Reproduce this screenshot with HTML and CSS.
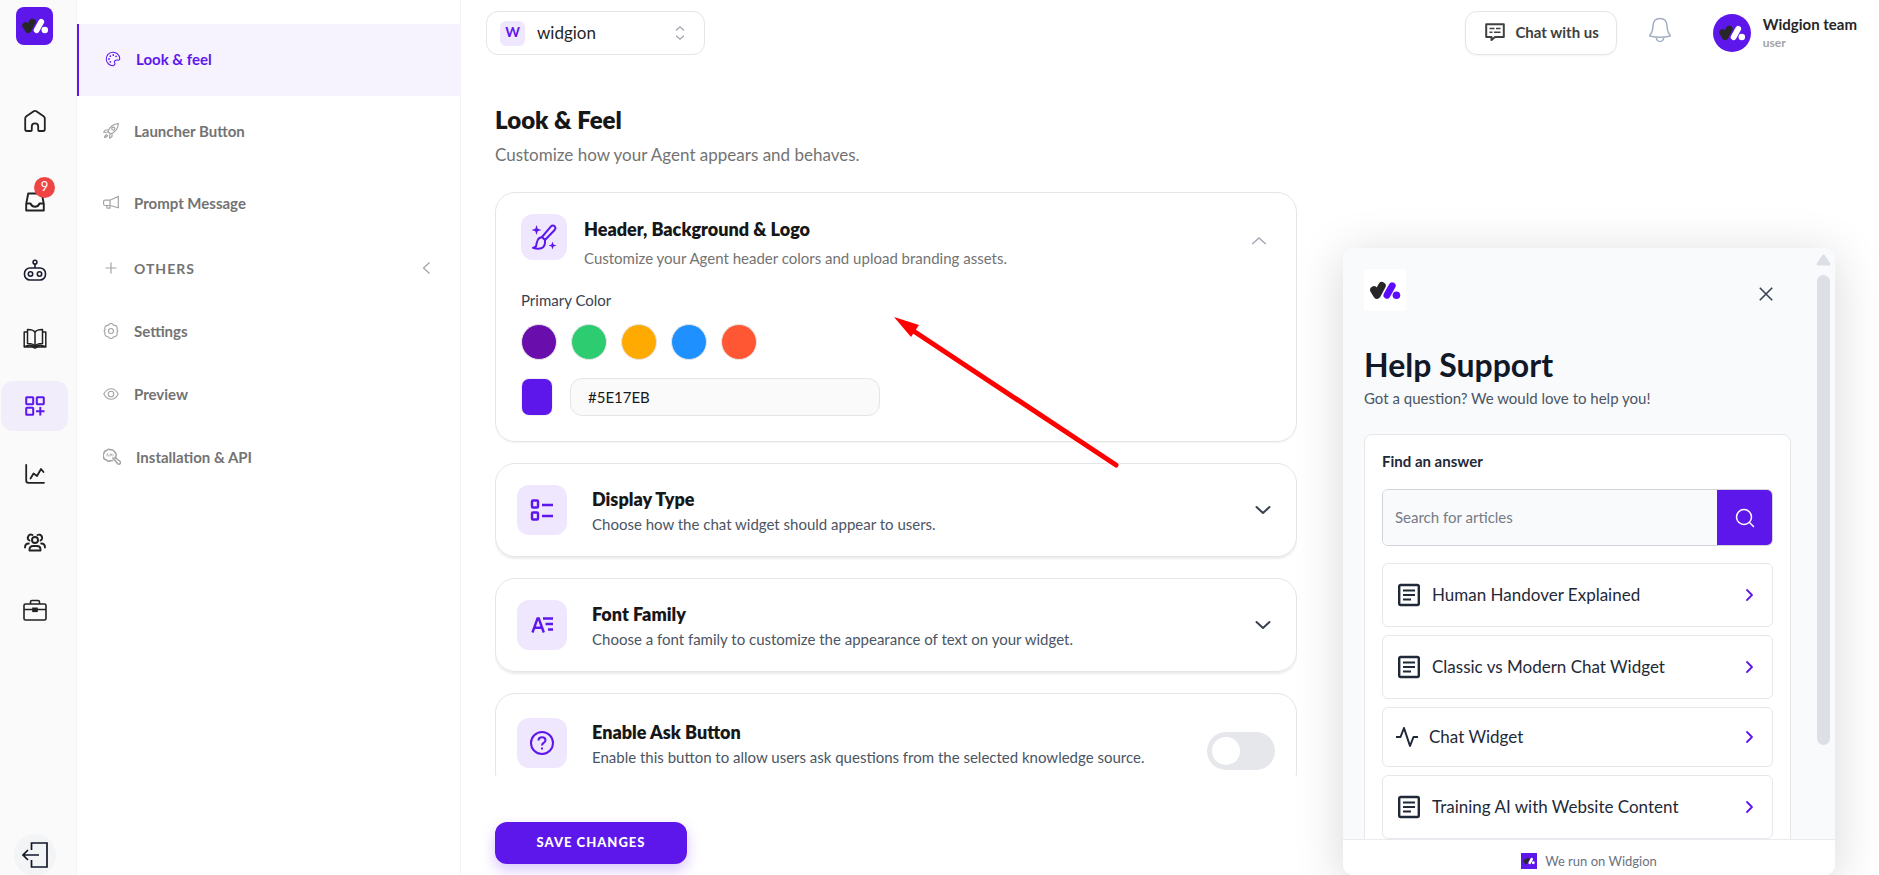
FILE: index.html
```html
<!DOCTYPE html>
<html lang="en">
  <head>
    <meta charset="UTF-8" />
    <meta name="viewport" content="width=device-width, initial-scale=1.0" />
    <title>Widgion - Look &amp; Feel</title>
    <link rel="stylesheet" href="styles.css">
  </head>
  <body>
    <svg class="sprite" aria-hidden="true">
      <symbol id="logo" viewBox="62 55 84 49">
        <path d="M75 78L83 91L96 67" fill="none" stroke="#272727" stroke-width="20" stroke-linecap="round" stroke-linejoin="round" />
        <path d="M123 67L109 92" fill="none" stroke="currentColor" stroke-width="18" stroke-linecap="round" />
        <circle cx="134" cy="92" r="10" fill="currentColor" />
      </symbol>
      <symbol id="chevron-down" viewBox="0 0 16 16">
        <path d="M1.500 5L8 11L14.500 5" fill="none" stroke="currentColor" stroke-width="2" stroke-linecap="round" stroke-linejoin="round" />
      </symbol>
      <symbol id="chevron-right" viewBox="0 0 12 14">
        <path d="M4 2L9 7L4 12" fill="none" stroke="currentColor" stroke-width="1.800" stroke-linecap="round" stroke-linejoin="round" />
      </symbol>
      <symbol id="article" viewBox="0 0 24 24">
        <rect x="2.200" y="2" width="19.600" height="20" rx="1.500" fill="none" stroke="currentColor" stroke-width="2.400" />
        <path d="M6 7.500h12M6 12h12M6 16.500h8" stroke="currentColor" stroke-width="2" />
      </symbol>
    </svg>

    <aside class="rail">
      <a class="rail-logo" href="#" aria-label="Widgion"><svg width="28" height="16"><use href="#logo" /></svg></a>
      <nav class="rail-nav">
        <a class="rail-link first" href="#" aria-label="Home">
          <svg width="24" height="24" viewBox="0 0 24 24" fill="none" stroke="currentColor" stroke-width="1.800" stroke-linejoin="round"><path d="M2.200 9.500Q2.200 8 3.400 7.200L10.700 2.200Q12 1.400 13.300 2.200L20.600 7.200Q21.800 8 21.800 9.500V20.300Q21.800 22 20 22H16.200Q15.200 22 15.200 21V17.500A3.200 3.200 0 0 0 8.800 17.500V21Q8.800 22 7.800 22H4Q2.200 22 2.200 20.300Z" /></svg>
        </a>
        <a class="rail-link" href="#" aria-label="Inbox">
          <svg width="20" height="20" viewBox="0 0 20 20" fill="none" stroke="currentColor" stroke-width="1.900" stroke-linejoin="round"><path d="M3.200 1.500H16.800L18.800 12V18.500H1.200V12Z" /><path d="M1.200 11.500H5.500Q7 14.800 10 14.800T14.500 11.500H18.800" /></svg>
          <span class="badge">9</span>
        </a>
        <a class="rail-link" href="#" aria-label="Agents">
          <svg width="24" height="22" viewBox="0 0 24 22" fill="none" stroke="#1a1c33" stroke-width="1.600"><rect x="1.500" y="9" width="21" height="12" rx="5.500" /><circle cx="7.500" cy="15" r="2.200" /><circle cx="16.500" cy="15" r="2.200" /><circle cx="12" cy="3.200" r="1.900" /><path d="M12 5v4" /></svg>
        </a>
        <a class="rail-link" href="#" aria-label="Knowledge">
          <svg width="24" height="21" viewBox="0 0 24 21" fill="none" stroke="currentColor" stroke-width="1.500" stroke-linejoin="round"><path d="M12 4.500Q11 1.500 4.500 1.500V15.500Q11 15.500 12 18.500Q13 15.500 19.500 15.500V1.500Q13 1.500 12 4.500V18" /><path d="M4.500 4H1.200V19H9.500L12 20L14.500 19H22.800V4H19.500M1.200 19Q7 15.500 12 19Q17 15.500 22.800 19" /></svg>
        </a>
        <a class="rail-link active" href="#" aria-label="Widgets">
          <svg width="20" height="20" viewBox="0 0 20 20" fill="none" stroke="currentColor" stroke-width="2"><rect x="1.200" y="1.200" width="7" height="7" rx="0.600" /><rect x="11.800" y="1.200" width="7" height="7" rx="0.600" /><rect x="1.200" y="11.800" width="7" height="7" rx="0.600" /><path d="M15.300 11v8.500M11 15.300h8.500" /></svg>
        </a>
        <a class="rail-link" href="#" aria-label="Analytics">
          <svg width="20" height="20" viewBox="0 0 20 20" fill="none" stroke="currentColor" stroke-width="1.800" stroke-linecap="round" stroke-linejoin="round"><path d="M1.200 1V16.500Q1.200 18.800 3.500 18.800H19" /><path d="M5.500 14.500L8.500 9.500L12 12L16 5L18.500 8" /></svg>
        </a>
        <a class="rail-link" href="#" aria-label="Team">
          <svg width="22" height="20" viewBox="0 0 22 20" fill="none" stroke="currentColor" stroke-width="1.900" stroke-linecap="round"><circle cx="11" cy="8" r="3" /><path d="M5.500 18.500V17.500Q5.500 14 9 14H13Q16.500 14 16.500 17.500V18.500Z" stroke-linejoin="round" /><path d="M5.500 8.500A3 3 0 1 1 8.500 3M13.500 3A3 3 0 1 1 16.500 8.500M1 15.500Q1 11.500 4.800 11.500M21 15.500Q21 11.500 17.200 11.500" /></svg>
        </a>
        <a class="rail-link" href="#" aria-label="Business">
          <svg width="24" height="22" viewBox="0 0 24 22" fill="none" stroke="currentColor" stroke-width="1.600"><rect x="1" y="5" width="22" height="16" rx="1.500" /><path d="M7.500 5V3Q7.500 1.500 9 1.500H15Q16.500 1.500 16.500 3V5M1 10.500H23" /><rect x="10" y="9.300" width="4" height="3" fill="currentColor" /></svg>
        </a>
      </nav>
      <a class="logout" href="#" aria-label="Log out">
        <svg width="28" height="28" viewBox="0 0 28 28" fill="none" stroke="#111827" stroke-width="1.700"><path d="M10.500 9V2H26V26H10.500V19" /><path d="M18 14H2.500M7 9L2 14L7 19" /></svg>
      </a>
    </aside>

    <nav class="sidebar">
      <a class="side-link active" href="#">
        <svg width="16" height="16" viewBox="0 0 18 18" fill="none" stroke="currentColor" stroke-width="1.200"><path d="M9.500 16.500A7.600 7.600 0 1 1 16.600 8.500Q16.500 10.500 14.500 10.200T11 11Q10 12 11 13.500T9.500 16.500Z" /><g fill="currentColor" stroke="none"><circle cx="4.500" cy="9" r="1" /><circle cx="6" cy="5.800" r="1" /><circle cx="9.300" cy="4.500" r="1" /><circle cx="12.500" cy="6" r="1" /><circle cx="6" cy="12.200" r="1" /></g></svg>
        Look &amp; feel
      </a>
      <a class="side-link" href="#">
        <svg width="16" height="16" viewBox="0 0 16 16" fill="none" stroke="currentColor" stroke-width="1.200"><path d="M5 8.500Q8 1 15.300 0.700Q15 8 7.500 11Z" /><circle cx="10.300" cy="5.700" r="1.500" /><path d="M5.500 7L2.500 7L0.800 9.300L4.500 9.500M9 10.500L9 13.500L6.800 15.200L6.500 11.500M4.200 11.500Q2 11.500 1.500 14.500Q4.500 14 4.500 12" /></svg>
        Launcher Button
      </a>
      <a class="side-link" href="#">
        <svg width="16" height="16" viewBox="0 0 16 16" fill="none" stroke="currentColor" stroke-width="1.200"><path d="M15.300 1.500V12.800L7 10.500H2Q0.600 10.500 0.600 9V6.500Q0.600 5.200 2 5.200H7ZM7 5.200V10.500M3.500 10.500L4.200 13.200H7V10.500" /></svg>
        Prompt Message
      </a>
      <button class="side-link group" type="button">
        <svg width="16" height="16" viewBox="0 0 16 16" stroke="currentColor" stroke-width="1.200"><path d="M8 2.500V13.500M2.500 8H13.500" /></svg>
        OTHERS
        <svg class="collapse" width="12" height="14" viewBox="0 0 12 14" fill="none" stroke="currentColor" stroke-width="1.200"><path d="M9.500 1.500L3.500 7L9.500 12.500" /></svg>
      </button>
      <a class="side-link small" href="#">
        <svg width="16" height="16" viewBox="0 0 16 16" fill="none" stroke="currentColor" stroke-width="1.100"><path d="M6.300 1Q8 0 9.700 1L10.500 2.300L12 2.400Q14 3 14.300 5L13.900 6.400L14.900 8L13.900 9.600L14.300 11Q14 13 12 13.600L10.500 13.700L9.700 15Q8 16 6.300 15L5.500 13.700L4 13.600Q2 13 1.700 11L2.100 9.600L1.100 8L2.100 6.400L1.700 5Q2 3 4 2.400L5.500 2.300Z" /><circle cx="8" cy="8" r="2.500" /></svg>
        Settings
      </a>
      <a class="side-link small" href="#">
        <svg width="16" height="16" viewBox="0 0 16 16" fill="none" stroke="currentColor" stroke-width="1.100"><path d="M0.800 8Q3.500 2.700 8 2.700T15.200 8Q12.500 13.300 8 13.300T0.800 8Z" /><circle cx="8" cy="8" r="2.800" /></svg>
        Preview
      </a>
      <a class="side-link small" href="#">
        <svg width="18" height="18" viewBox="1 0 18 18" fill="none" stroke="currentColor" stroke-width="1.500"><path d="M12.500 10.500Q14.500 9.500 14 7.500Q14.500 5.500 12.800 4.200Q11.500 1.500 8.800 1.800Q6 0.500 4.500 2.500Q2 3 2 5.200Q0.500 7 1.500 8.800Q1.500 11.500 4 11.800Q6 14 8.500 12.800Q10 13 11 12" /><path d="M10.500 9.500L15.500 15.500Q17 17 18.300 15.500Q19 14.200 17.500 13L12.500 9" /><path d="M4.500 8.500L5.500 5.500L6.500 8.500M8 8.500V6H9.500V7.300H8M11 5.700V8.500" stroke-width="0.700" /></svg>
        Installation &amp; API
      </a>
    </nav>

    <main class="main">
      <header class="topbar">
        <div class="workspace">
          <span class="workspace-badge">W</span>
          <select aria-label="Workspace">
            <option>widgion</option>
          </select>
          <svg width="12" height="16" viewBox="0 0 12 16" fill="none" stroke="#9ca3af" stroke-width="1.200" stroke-linecap="round"><path d="M2.500 5L6 1.800L9.500 5M2.500 11L6 14.200L9.500 11" /></svg>
        </div>
        <button class="chat-button" type="button">
          <svg width="20" height="18" viewBox="0 0 20 18" fill="none" stroke="currentColor" stroke-width="2" stroke-linejoin="round"><path d="M1.200 1.200H18.800V14H10L6.500 17V14H1.200Z" /><path d="M4.500 5.500H9.500M11 5.500H15.500M4.500 9.200H7.500M9 9.200H15.500" stroke-width="1.500" /></svg>
          Chat with us
        </button>
        <button class="bell" type="button" aria-label="Notifications">
          <svg width="24" height="26" viewBox="0 0 24 26" fill="none" stroke="#a3aec2" stroke-width="1.500" stroke-linejoin="round"><path d="M12 1.500Q5.500 1.500 5 8.500Q5 14.500 2 18Q1 19 2.500 19.300Q12 21 21.500 19.300Q23 19 22 18Q19 14.500 19 8.500Q18.500 1.500 12 1.500Z" /><path d="M8.300 20.500Q8.800 24.500 12 24.500T15.700 20.500" /></svg>
        </button>
        <div class="user">
          <span class="avatar"><svg width="28" height="16"><use href="#logo" /></svg></span>
          <div>
            <div class="user-name">Widgion team</div>
            <div class="user-role">user</div>
          </div>
        </div>
      </header>

      <div class="content">
        <section class="settings">
          <h1>Look &amp; Feel</h1>
          <p class="lead">Customize how your Agent appears and behaves.</p>

          <div class="cards">
            <div class="card open">
              <div class="card-head">
                <span class="tile">
                  <svg width="26" height="26" viewBox="0 0 26 26" fill="none" stroke="currentColor" stroke-width="2" stroke-linejoin="round"><path d="M11 13L20 2.300Q21.800 0.800 23.700 2.300Q25.200 4 23.600 6L14 16Z" /><path d="M11.500 13Q7.500 13.500 6.500 16.500Q5.500 19 5 22.500L2 23.800Q7 25.500 11 24Q14.500 22 14 16" /><path d="M5.500 1L6.700 4.800L10.500 6L6.700 7.200L5.500 11L4.300 7.200L0.500 6L4.300 4.800ZM21.500 17.500L22.500 20.500L25.500 21.500L22.500 22.500L21.500 25.500L20.500 22.500L17.500 21.500L20.500 20.500Z" fill="currentColor" stroke="none" /></svg>
                </span>
                <div class="card-text">
                  <h2>Header, Background &amp; Logo</h2>
                  <p>Customize your Agent header colors and upload branding assets.</p>
                </div>
                <button class="toggle-card" type="button" aria-label="Collapse">
                  <svg class="flip" width="16" height="16" viewBox="0 0 16 16" fill="none" stroke="#a3a9b5" stroke-width="1.500"><path d="M1.200 5L8 11L14.800 5" /></svg>
                </button>
              </div>
              <label class="field-label" for="color">Primary Color</label>
              <div class="swatches">
                <button class="swatch purple" type="button" aria-label="Purple"></button>
                <button class="swatch green" type="button" aria-label="Green"></button>
                <button class="swatch orange" type="button" aria-label="Orange"></button>
                <button class="swatch blue" type="button" aria-label="Blue"></button>
                <button class="swatch red" type="button" aria-label="Red"></button>
              </div>
              <div class="color-row">
                <input class="color-picker" type="color" value="#5e17eb" aria-label="Pick a color">
                <input class="color-text" id="color" type="text" value="#5E17EB">
              </div>
            </div>

            <div class="card">
              <div class="card-head">
                <span class="tile">
                  <svg width="24" height="24" viewBox="0 0 24 24" fill="none" stroke="currentColor" stroke-width="2.400"><rect x="2" y="2.500" width="6" height="7" rx="1" /><rect x="2" y="14.500" width="6" height="7" rx="1" /><path d="M12 7H23M12 18H23" /></svg>
                </span>
                <div class="card-text">
                  <h2>Display Type</h2>
                  <p>Choose how the chat widget should appear to users.</p>
                </div>
                <button class="toggle-card" type="button" aria-label="Expand"><svg width="16" height="16"><use href="#chevron-down" /></svg></button>
              </div>
            </div>

            <div class="card">
              <div class="card-head">
                <span class="tile">
                  <svg width="24" height="20" viewBox="0 0 24 20" fill="none" stroke="currentColor" stroke-width="2.400"><path d="M2.500 17.500L7.500 3.500H8.800L13.800 17.500M4.500 12.800H11.800" /><path d="M13 3.500H23M15.500 9H23M18 14.500H23" /></svg>
                </span>
                <div class="card-text">
                  <h2>Font Family</h2>
                  <p>Choose a font family to customize the appearance of text on your widget.</p>
                </div>
                <button class="toggle-card" type="button" aria-label="Expand"><svg width="16" height="16"><use href="#chevron-down" /></svg></button>
              </div>
            </div>

            <div class="card">
              <div class="card-head">
                <span class="tile">
                  <svg width="26" height="26" viewBox="0 0 26 26" fill="none" stroke="currentColor" stroke-width="2"><circle cx="13" cy="13" r="11" /><path d="M9.500 10.500Q9.500 7.300 13 7.300T16.500 10.300Q16.500 12 14.500 13Q13 13.800 13 15.500" /><path d="M13 17.500V19.500" /></svg>
                </span>
                <div class="card-text">
                  <h2><label for="ask">Enable Ask Button</label></h2>
                  <p>Enable this button to allow users ask questions from the selected knowledge source.</p>
                </div>
                <input class="switch" id="ask" type="checkbox">
              </div>
            </div>
          </div>

          <div class="actions">
            <button class="save" type="button">SAVE CHANGES</button>
          </div>
        </section>

        <section class="widget">
          <div class="widget-scroll">
            <div class="widget-body">
              <div class="widget-top">
                <span class="widget-logo"><svg width="32" height="19"><use href="#logo" /></svg></span>
                <button class="close" type="button" aria-label="Close">
                  <svg width="14" height="14" viewBox="0 0 14 14" stroke="#374151" stroke-width="1.600"><path d="M0.800 0.800L13.200 13.200M13.200 0.800L0.800 13.200" /></svg>
                </button>
              </div>
              <h2 class="widget-title">Help Support</h2>
              <p class="widget-lead">Got a question? We would love to help you!</p>
              <div class="answers">
                <label class="answers-title" for="search">Find an answer</label>
                <div class="search">
                  <input id="search" type="text" placeholder="Search for articles">
                  <button type="button" aria-label="Search">
                    <svg width="20" height="20" viewBox="0 0 20 20" fill="none" stroke="#fff" stroke-width="1.500" stroke-linecap="round"><circle cx="9" cy="9" r="7.500" /><path d="M14.500 14.500L18.500 18.500" /></svg>
                  </button>
                </div>
                <a class="answer" href="#"><svg width="24" height="24"><use href="#article" /></svg><span>Human Handover Explained</span><svg class="go" width="12" height="14"><use href="#chevron-right" /></svg></a>
                <a class="answer" href="#"><svg width="24" height="24"><use href="#article" /></svg><span>Classic vs Modern Chat Widget</span><svg class="go" width="12" height="14"><use href="#chevron-right" /></svg></a>
                <a class="answer compact" href="#"><svg width="22" height="22" viewBox="0 0 22 22" fill="none" stroke="currentColor" stroke-width="2" stroke-linejoin="round"><path d="M0 11H4.500L8 2L14 20L17.500 11H22" /></svg><span>Chat Widget</span><svg class="go" width="12" height="14"><use href="#chevron-right" /></svg></a>
                <a class="answer" href="#"><svg width="24" height="24"><use href="#article" /></svg><span>Training AI with Website Content</span><svg class="go" width="12" height="14"><use href="#chevron-right" /></svg></a>
              </div>
            </div>
            <div class="scrollbar">
              <svg width="15" height="12" viewBox="0 0 15 12"><path d="M7.500 2L13 10H2Z" fill="#dcdfe5" stroke="#dcdfe5" stroke-width="3" stroke-linejoin="round" /></svg>
              <div class="thumb"></div>
            </div>
          </div>
          <footer class="widget-footer">
            <span class="mini-logo"><svg width="12" height="8"><use href="#logo" /></svg></span>
            We run on Widgion
          </footer>
        </section>

        <!-- pointer to the header card -->
        <svg class="arrow" width="228" height="156" viewBox="0 0 228 156" aria-hidden="true">
          <path d="M18 13L222 148" stroke="#f00" stroke-width="5" stroke-linecap="round" />
          <path d="M0 0L25 8L17 20Z" fill="#f00" />
        </svg>
      </div>
    </main>
  </body>
</html>
```
FILE: styles.css
```css
* {
  box-sizing: border-box;
}
body {
  margin: 0;
  height: 100vh;
  display: flex;
  overflow: hidden;
  background: #fff;
  color: #171717;
  font-family: Lato, "Liberation Sans", sans-serif;
  font-size: 15px;
  line-height: 20px;
}
h1,
h2,
p {
  margin: 0;
}
a {
  color: inherit;
  text-decoration: none;
}
button,
input,
select {
  font-family: inherit;
}
button {
  padding: 0;
  border: none;
  background: none;
  cursor: pointer;
}
svg {
  display: block;
  flex: none;
}
.sprite {
  position: absolute;
  width: 0;
  height: 0;
}

/* icon rail */
.rail {
  flex: none;
  width: 77px;
  padding-left: 1px;
  display: flex;
  flex-direction: column;
  background: #fafafa;
  border-right: 1px solid #f3f3f3;
}
.rail-logo {
  margin: 7px 0 51px 15px;
  width: 37px;
  height: 38px;
  display: flex;
  align-items: center;
  justify-content: center;
  border-radius: 8px;
  background: #5e17eb;
  color: #fff;
}
.rail-nav {
  display: flex;
  flex-direction: column;
  gap: 18px;
}
.rail-link {
  position: relative;
  width: 67px;
  height: 50px;
  display: flex;
  align-items: center;
  justify-content: center;
  border-radius: 12px;
  color: #222;
}
.rail-link.first {
  margin-bottom: 13px;
}
.rail-link.active {
  background: #f1edfa;
  color: #5e17eb;
}
.badge {
  position: absolute;
  top: 0;
  left: 33px;
  width: 21px;
  height: 21px;
  border-radius: 50%;
  background: #ef4444;
  color: #fff;
  font-size: 13px;
  line-height: 19px;
  text-align: center;
}
.logout {
  margin: auto 0 -1px 13px;
  width: 42px;
  height: 42px;
  display: flex;
  align-items: center;
  justify-content: center;
  border-radius: 50%;
  background: #f3f4f6;
}

/* section menu */
.sidebar {
  flex: none;
  width: 384px;
  padding-top: 24px;
  border-right: 1px solid #f3f3f3;
}
.side-link {
  width: 100%;
  height: 72px;
  padding: 0 0 2px 26px;
  display: flex;
  align-items: center;
  gap: 15px;
  color: #737373;
  font-size: 15px;
  font-weight: 700;
}
.side-link svg {
  color: #a3a3a3;
}
.side-link.active {
  border-left: 2px solid #5e17eb;
  background: #f6f3fe;
  color: #5e17eb;
}
.side-link.active svg {
  color: #5e17eb;
}
.side-link.group {
  height: 60px;
  padding-bottom: 4px;
  font-size: 14px;
  letter-spacing: 1px;
}
.side-link.small {
  height: 63px;
}
.side-link .collapse {
  margin-left: auto;
  margin-right: 28px;
}

/* top bar */
.main {
  flex: 1;
  min-width: 0;
  display: flex;
  flex-direction: column;
}
.topbar {
  height: 66px;
  flex: none;
  padding: 0 22px 0 25px;
  display: flex;
  align-items: center;
}
.workspace {
  width: 219px;
  height: 44px;
  padding: 0 18px 0 13px;
  display: flex;
  align-items: center;
  border: 1px solid #e5e5e5;
  border-radius: 12px;
}
.workspace-badge {
  width: 25px;
  height: 25px;
  border-radius: 6px;
  background: #eee7fe;
  color: #5e17eb;
  font-weight: 700;
  font-size: 14px;
  line-height: 22px;
  text-align: center;
}
.workspace select {
  flex: 1;
  appearance: none;
  padding: 0 0 2px 12px;
  border: none;
  background: none;
  color: #262626;
  font-size: 17px;
}
.chat-button {
  margin-left: auto;
  height: 44px;
  padding: 0 17px 2px 19px;
  display: flex;
  align-items: center;
  gap: 10px;
  border: 1px solid #e5e5e5;
  border-radius: 12px;
  box-shadow: 0 1px 2px rgba(0, 0, 0, 0.05);
  color: #404040;
  font-size: 15px;
  font-weight: 700;
}
.bell {
  margin: 0 41px 6px 31px;
}
.user {
  display: flex;
  align-items: center;
  gap: 12px;
}
.avatar {
  width: 38px;
  height: 38px;
  display: flex;
  align-items: center;
  justify-content: center;
  border-radius: 50%;
  background: #5e17eb;
  color: #fff;
}
.user-name {
  color: #262626;
  font-weight: 700;
}
.user-role {
  color: #a3a3a3;
  font-size: 12px;
  font-weight: 700;
  line-height: 18px;
}

/* settings */
.content {
  position: relative;
  flex: 1;
  min-height: 0;
  padding: 0 44px 0 34px;
  display: flex;
  gap: 46px;
}
.settings {
  flex: 1;
  min-width: 0;
  display: flex;
  flex-direction: column;
}
h1 {
  margin-top: 37px;
  font-size: 24px;
  font-weight: 800;
  line-height: 34px;
}
.lead {
  margin: 6px 0 25px;
  color: #737373;
  font-size: 17px;
  line-height: 24px;
}
.cards {
  flex: 1;
  min-height: 0;
  overflow: hidden;
  display: flex;
  flex-direction: column;
  gap: 21px;
}
.card {
  flex: none;
  padding: 21px;
  border: 1px solid #e5e5e5;
  border-radius: 20px;
  box-shadow: 0 2px 2px rgba(0, 0, 0, 0.08);
}
.card.open {
  padding: 21px 25px 25px;
  box-shadow: 0 1px 2px rgba(0, 0, 0, 0.05);
}
.card-head {
  display: flex;
  align-items: center;
}
.tile {
  flex: none;
  width: 50px;
  height: 50px;
  display: flex;
  align-items: center;
  justify-content: center;
  border-radius: 12px;
  background: #efe7fe;
  color: #5e17eb;
}
.card-text {
  flex: 1;
  padding-left: 25px;
}
.card h2 {
  font-size: 18px;
  font-weight: 800;
  line-height: 28px;
}
.card p {
  color: #4b5563;
  line-height: 22px;
}
.card.open .card-head {
  align-items: flex-start;
}
.card.open .tile {
  width: 46px;
  height: 46px;
}
.card.open .card-text {
  padding-left: 17px;
}
.card.open h2 {
  line-height: 30px;
}
.card.open p {
  color: #737373;
  line-height: 28px;
}
.toggle-card {
  width: 16px;
  height: 16px;
  margin-right: 4px;
  color: #374151;
}
.card.open .toggle-card {
  margin: 19px 4px 0 0;
}
.flip {
  transform: rotate(180deg);
}
.field-label {
  display: block;
  margin: 18px 0 14px;
  color: #374151;
}
.swatches {
  display: flex;
  gap: 14px;
}
.swatch {
  width: 36px;
  height: 36px;
  border: 1px solid #e5e5e5;
  border-radius: 50%;
}
.purple {
  background: #6a0dad;
}
.green {
  background: #2ecc71;
}
.orange {
  background: #ffaa00;
}
.blue {
  background: #1e90ff;
}
.red {
  background: #ff5733;
}
.color-row {
  margin-top: 18px;
  display: flex;
  align-items: center;
  gap: 17px;
}
.color-picker {
  appearance: none;
  width: 32px;
  height: 38px;
  padding: 0;
  border: 1px solid #eeeeee;
  border-radius: 8px;
  background: none;
  overflow: hidden;
}
.color-picker::-webkit-color-swatch-wrapper {
  padding: 0;
}
.color-picker::-webkit-color-swatch {
  border: none;
}
.color-text {
  width: 310px;
  height: 38px;
  padding: 0 17px;
  border: 1px solid #e5e5e5;
  border-radius: 12px;
  background: #fafafa;
  color: #171717;
  font-size: 15px;
}
.switch {
  appearance: none;
  flex: none;
  width: 68px;
  height: 38px;
  margin: 17px 0 0;
  padding: 5px;
  border-radius: 19px;
  background: #e5e7eb;
}
.switch::before {
  content: "";
  display: block;
  width: 28px;
  height: 28px;
  border-radius: 50%;
  background: #fff;
}
.actions {
  flex: none;
  height: 99px;
  padding-top: 46px;
}
.save {
  width: 192px;
  height: 42px;
  padding-bottom: 2px;
  border-radius: 12px;
  background: #5e17eb;
  box-shadow: 0 6px 14px rgba(94, 23, 235, 0.25);
  color: #fff;
  font-size: 13px;
  font-weight: 900;
  letter-spacing: 1px;
}

/* widget preview */
.widget {
  flex: none;
  width: 492px;
  margin-top: 182px;
  display: flex;
  flex-direction: column;
  overflow: hidden;
  border-radius: 10px;
  background: #f9fafc;
  box-shadow: 0 8px 50px rgba(0, 0, 0, 0.16);
}
.widget-scroll {
  flex: 1;
  min-height: 0;
  display: flex;
  overflow: hidden;
}
.widget-body {
  flex: 1;
  padding: 21px 25px 0 21px;
}
.widget-top {
  display: flex;
  align-items: center;
  justify-content: space-between;
}
.widget-logo {
  width: 42px;
  height: 42px;
  display: flex;
  align-items: center;
  justify-content: center;
  border-radius: 3px;
  background: #fff;
  color: #5b0cff;
}
.close {
  margin: 7px 18px 0 0;
}
.widget-title {
  margin-top: 33px;
  color: #111827;
  font-size: 32px;
  font-weight: 700;
  line-height: 42px;
}
.widget-lead {
  margin-top: 1px;
  color: #4b5563;
  line-height: 22px;
}
.answers {
  margin-top: 25px;
  padding: 16px 17px;
  border: 1px solid #e5e7eb;
  border-radius: 8px;
  background: #fff;
}
.answers-title {
  display: block;
  color: #1f2937;
  font-weight: 700;
}
.search {
  height: 57px;
  margin: 18px 0 17px;
  display: flex;
  overflow: hidden;
  border: 1px solid #d1d5db;
  border-radius: 6px;
}
.search input {
  flex: 1;
  min-width: 0;
  padding: 0 12px 2px;
  border: none;
  background: #f9fafc;
  font-size: 15px;
}
.search input::placeholder {
  color: #757b88;
}
.search button {
  width: 55px;
  display: flex;
  align-items: center;
  justify-content: center;
  background: #5e17eb;
}
.answer {
  height: 64px;
  margin-bottom: 8px;
  padding: 0 17px 0 14px;
  display: flex;
  align-items: center;
  gap: 11px;
  border: 1px solid #e5e7eb;
  border-radius: 6px;
  color: #1f2937;
  font-size: 17px;
}
.answer.compact {
  height: 60px;
  padding-left: 13px;
}
.answer .go {
  margin-left: auto;
  color: #5e17eb;
}
.scrollbar {
  flex: none;
  width: 19px;
  padding-top: 6px;
}
.thumb {
  width: 13px;
  height: 470px;
  margin: 9px 0 0 1px;
  border-radius: 7px;
  background: #dcdfe5;
}
.widget-footer {
  flex: none;
  height: 36px;
  display: flex;
  align-items: center;
  justify-content: center;
  gap: 8px;
  padding-top: 6px;
  border-top: 1px solid #e9ebee;
  background: #fff;
  color: #6b7280;
  font-size: 13px;
}
.mini-logo {
  width: 16px;
  height: 16px;
  display: flex;
  align-items: center;
  justify-content: center;
  background: #5e17eb;
  color: #fff;
}

.arrow {
  position: absolute;
  left: 433px;
  top: 251px;
  pointer-events: none;
}
```
